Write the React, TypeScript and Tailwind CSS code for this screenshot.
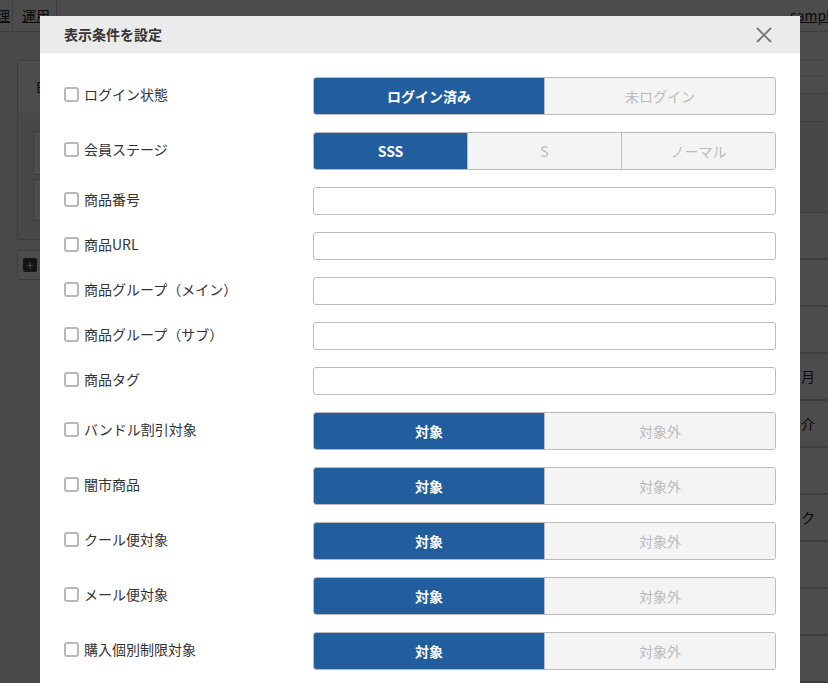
import React from 'react';

const font = { fontFamily: '"Noto Sans CJK JP", "Noto Sans", sans-serif' };

type Row =
  | { label: string; kind: 'seg'; options: string[] }
  | { label: string; kind: 'input' };

const rows: Row[] = [
  { label: 'ログイン状態', kind: 'seg', options: ['ログイン済み', '未ログイン'] },
  { label: '会員ステージ', kind: 'seg', options: ['SSS', 'S', 'ノーマル'] },
  { label: '商品番号', kind: 'input' },
  { label: '商品URL', kind: 'input' },
  { label: '商品グループ（メイン）', kind: 'input' },
  { label: '商品グループ（サブ）', kind: 'input' },
  { label: '商品タグ', kind: 'input' },
  { label: 'バンドル割引対象', kind: 'seg', options: ['対象', '対象外'] },
  { label: '闇市商品', kind: 'seg', options: ['対象', '対象外'] },
  { label: 'クール便対象', kind: 'seg', options: ['対象', '対象外'] },
  { label: 'メール便対象', kind: 'seg', options: ['対象', '対象外'] },
  { label: '購入個別制限対象', kind: 'seg', options: ['対象', '対象外'] },
];

function Segmented({ options }: { options: string[] }) {
  return (
    <div className="flex h-[38px] w-[463px] overflow-hidden rounded-[3px] border border-[#bbbbbb]">
      {options.map((o, i) => (
        <button
          key={o}
          className={
            i === 0
              ? 'flex flex-1 items-center justify-center bg-[#225e9e] text-[14px] font-bold text-white'
              : 'flex flex-1 items-center justify-center border-l border-[#bbbbbb] bg-[#f4f4f4] text-[14px] text-[#bbbbbb]'
          }
        >
          {o}
        </button>
      ))}
    </div>
  );
}

function Background() {
  return (
    <div className="flex h-full flex-col bg-[#f4f4f4] text-[14px] text-[#222]">
      <div className="flex h-[32px] items-center border-b border-[#cfcfcf] bg-white">
        <span className="-ml-[4px] flex h-full items-center border-r border-[#d8d8d8] pr-[2px] underline">理</span>
        <span className="flex h-full items-center border-r border-[#d8d8d8] pl-[9px] pr-[6px] underline">運用</span>
        <span className="ml-auto w-[38px] overflow-hidden whitespace-nowrap underline">sample</span>
      </div>
      <div className="flex flex-1">
        <div className="w-[790px] pl-[17px] pt-[28px]">
          <div className="h-[180px] w-[400px] rounded-[3px] border border-[#cccccc] bg-[#f0f0f0]">
            <div className="flex h-[52px] items-center bg-white pl-[18px] text-[#223399]">E</div>
            <div className="px-[15px] pt-[18px]">
              <div className="mb-[4px] h-[44px] rounded-[3px] border border-[#cccccc] bg-white" />
              <div className="h-[42px] rounded-[3px] border border-[#cccccc] bg-white" />
            </div>
          </div>
          <div className="mt-[10px] flex h-[30px] w-[400px] items-center rounded-[3px] border border-[#cccccc] bg-white pl-[5px]">
            <span className="flex h-[14px] w-[14px] items-center justify-center rounded-[2px] bg-[#444] text-[12px] leading-none text-white">+</span>
          </div>
        </div>
        <div className="flex flex-1 flex-col bg-white">
          <div className="h-[28px] border-b border-[#e4e4e4]" />
          <div className="h-[16px] border-b border-[#e4e4e4]" />
          <div className="h-[18px] border-b border-[#cccccc]" />
          <div className="h-[28px] border-b border-[#cccccc] bg-[#f7f7f7]" />
          <div className="h-[91px] border-b border-[#cccccc] bg-[#f2f2f2]" />
          {['', '', '', '月', '介', '', 'ク', '', '', ''].map((t, i) => (
            <div key={i} className="flex h-[47px] items-center whitespace-nowrap border-b-2 border-[#d0d0d0] bg-white pl-[11px]">
              {t}
            </div>
          ))}
        </div>
      </div>
    </div>
  );
}

export default function App() {
  return (
    <div className="relative h-[683px] w-[828px] overflow-hidden" style={font}>
      <Background />
      <div className="absolute inset-0 bg-black/70" />
      <div className="absolute left-[40px] top-[16px] w-[760px] bg-white">
        <div className="flex h-[37px] items-center justify-between bg-[#ebebeb] pl-[24px] pr-[28px]">
          <h2 className="text-[14px] font-bold text-[#333]">表示条件を設定</h2>
          <svg width="16" height="16" viewBox="0 0 16 16" stroke="#777" strokeWidth="1.8" fill="none">
            <path d="M1 1 L15 15 M15 1 L1 15" />
          </svg>
        </div>
        <div className="px-[24px] pt-[24px] pb-[24px]">
          {rows.map((r) => (
            <div key={r.label} className="mb-[17px] flex items-center">
              <label className="flex w-[249px] items-center gap-[5px] pb-[4px] text-[14px] text-[#333]">
                <span className="h-[15px] w-[15px] rounded-[3px] border-2 border-[#b8b8b8] bg-white" />
                {r.label}
              </label>
              {r.kind === 'seg' ? (
                <Segmented options={r.options} />
              ) : (
                <input className="h-[28px] w-[463px] rounded-[3px] border border-[#bbbbbb] bg-white px-2 text-[14px]" />
              )}
            </div>
          ))}
        </div>
      </div>
    </div>
  );
}
